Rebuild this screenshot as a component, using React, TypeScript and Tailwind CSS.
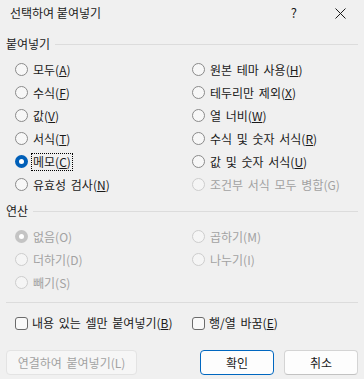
import React from 'react'

type Opt = { label: string; key?: string; checked?: boolean; disabled?: boolean; focus?: boolean }

const pasteLeft: Opt[] = [
  { label: '모두', key: 'A' },
  { label: '수식', key: 'F' },
  { label: '값', key: 'V' },
  { label: '서식', key: 'T' },
  { label: '메모', key: 'C', checked: true, focus: true },
  { label: '유효성 검사', key: 'N' },
]

const pasteRight: Opt[] = [
  { label: '원본 테마 사용', key: 'H' },
  { label: '테두리만 제외', key: 'X' },
  { label: '열 너비', key: 'W' },
  { label: '수식 및 숫자 서식', key: 'R' },
  { label: '값 및 숫자 서식', key: 'U' },
  { label: '조건부 서식 모두 병합(G)', disabled: true },
]

const opLeft: Opt[] = [
  { label: '없음(O)', checked: true, disabled: true },
  { label: '더하기(D)', disabled: true },
  { label: '빼기(S)', disabled: true },
]

const opRight: Opt[] = [
  { label: '곱하기(M)', disabled: true },
  { label: '나누기(I)', disabled: true },
]

function Label({ label, hotkey }: { label: string; hotkey?: string }) {
  if (!hotkey) return <>{label}</>
  return (
    <>
      {label}(<span className="underline underline-offset-[1px]">{hotkey}</span>)
    </>
  )
}

function Radio({ opt }: { opt: Opt }) {
  let circle = 'border border-[#8a8a8a] bg-[#f7f7f7]'
  if (opt.checked && !opt.disabled) circle = 'bg-[#005fb8]'
  else if (opt.checked && opt.disabled) circle = 'bg-[#c4c4c4]'
  else if (opt.disabled) circle = 'border border-[#cdcdcd] bg-[#f5f5f5]'

  return (
    <div className="flex h-[23px] items-center">
      <div className={`flex h-[13px] w-[13px] shrink-0 items-center justify-center rounded-full ${circle}`}>
        {opt.checked && <div className="h-[5px] w-[5px] rounded-full bg-white" />}
      </div>
      <div
        className={`ml-[3px] px-[1px] leading-[16px] [word-spacing:2px] ${opt.disabled ? 'text-[#a2a2a2]' : 'text-[#1a1a1a]'} ${
          opt.focus ? 'border border-dotted border-black' : 'border border-transparent'
        }`}
      >
        <Label label={opt.label} hotkey={opt.key} />
      </div>
    </div>
  )
}

function Group({ title }: { title: string }) {
  return (
    <div className="flex h-[14px] items-center px-[6px]">
      <span className="leading-[14px] text-[#1a1a1a]">{title}</span>
      <div className="ml-[5px] h-px flex-1 bg-[#dcdcdc]" />
    </div>
  )
}

function Checkbox({ label, hotkey }: { label: string; hotkey: string }) {
  return (
    <div className="flex h-[20px] items-center">
      <div className="h-[13px] w-[13px] shrink-0 rounded-[3px] border border-[#6b6b6b] bg-[#f9f9f9]" />
      <span className="ml-[4px] text-[#1a1a1a] [word-spacing:2px]">
        <Label label={label} hotkey={hotkey} />
      </span>
    </div>
  )
}

export default function App() {
  return (
    <div
      className="flex h-[379px] w-[364px] flex-col bg-[#f0f0f0] text-[12px]"
      style={{ fontFamily: '"Noto Sans CJK KR", "Noto Sans", sans-serif' }}
    >
      {/* Title bar */}
      <div className="flex h-[26px] items-center pl-[10px] pr-[18px]">
        <span className="flex-1 text-[#1a1a1a]">선택하여 붙여넣기</span>
        <span className="mr-[38px] text-[13px] text-[#1a1a1a]">?</span>
        <svg width="11" height="11" viewBox="0 0 11 11" className="text-[#1a1a1a]">
          <path d="M0.5 0.5 L10.5 10.5 M10.5 0.5 L0.5 10.5" stroke="currentColor" strokeWidth="1" />
        </svg>
      </div>

      {/* Paste */}
      <div className="mt-[11px]">
        <Group title="붙여넣기" />
      </div>
      <div className="mt-[7px] grid grid-cols-[177px_1fr] pl-[15px]">
        <div className="flex flex-col">
          {pasteLeft.map((o, i) => (
            <Radio key={i} opt={o} />
          ))}
        </div>
        <div className="flex flex-col">
          {pasteRight.map((o, i) => (
            <Radio key={i} opt={o} />
          ))}
        </div>
      </div>

      {/* Operation */}
      <div className="mt-[8px]">
        <Group title="연산" />
      </div>
      <div className="mt-[7px] grid grid-cols-[177px_1fr] pl-[15px]">
        <div className="flex flex-col">
          {opLeft.map((o, i) => (
            <Radio key={i} opt={o} />
          ))}
        </div>
        <div className="flex flex-col">
          {opRight.map((o, i) => (
            <Radio key={i} opt={o} />
          ))}
        </div>
      </div>

      <div className="mx-[6px] mt-[8px] h-px bg-[#dcdcdc]" />

      <div className="mt-[10px] grid grid-cols-[177px_1fr] pl-[15px]">
        <Checkbox label="내용 있는 셀만 붙여넣기" hotkey="B" />
        <Checkbox label="행/열 바꿈" hotkey="E" />
      </div>

      {/* Buttons */}
      <div className="mt-[17px] flex items-center px-[6px]">
        <button className="h-[25px] w-[131px] rounded-[4px] border border-[#e3e3e3] bg-[#f6f6f6] text-[#a2a2a2] [word-spacing:2px]">
          연결하여 붙여넣기(L)
        </button>
        <div className="flex-1" />
        <button className="h-[25px] w-[74px] rounded-[4px] border border-[#0067c0] bg-[#fdfdfd] text-[#1a1a1a]">
          확인
        </button>
        <button className="ml-[10px] h-[25px] w-[74px] rounded-[4px] border border-[#d4d4d4] border-b-[#c2c2c2] bg-[#fdfdfd] text-[#1a1a1a]">
          취소
        </button>
      </div>
    </div>
  )
}
